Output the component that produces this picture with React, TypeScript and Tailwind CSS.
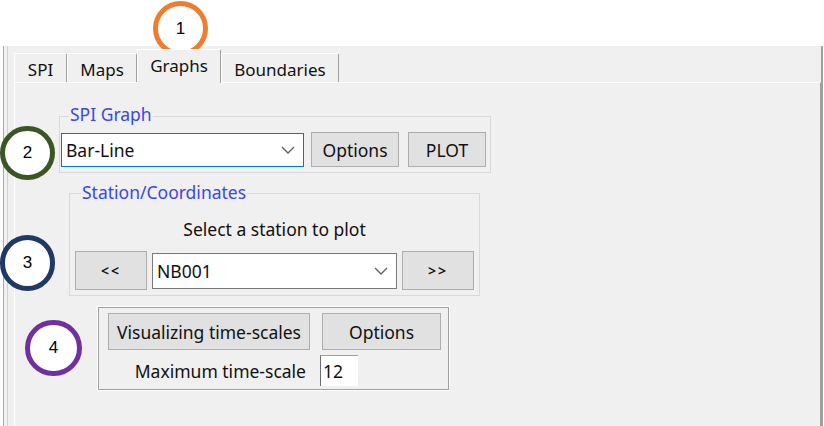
import React from "react";

type Tab = { label: string; width: string; active?: boolean };

const TABS: Tab[] = [
  { label: "SPI", width: "w-[53px]" },
  { label: "Maps", width: "w-[70px]" },
  { label: "Graphs", width: "w-[84px]", active: true },
  { label: "Boundaries", width: "w-[118px]" },
];

function Chevron() {
  return (
    <svg width="14" height="8" viewBox="0 0 14 8" className="shrink-0">
      <polyline points="1,1 7,7 13,1" fill="none" stroke="#5f5f5f" strokeWidth="1.3" />
    </svg>
  );
}

function Combo({ value, width, focused }: { value: string; width: string; focused?: boolean }) {
  return (
    <div
      className={`flex h-[34px] items-center justify-between bg-white pl-[4px] pr-[8px] ${width} border ${
        focused ? "border-[#0078d7]" : "border-[#7a7a7a]"
      }`}
    >
      <span>{value}</span>
      <Chevron />
    </div>
  );
}

function Btn({ children, className }: { children: React.ReactNode; className: string }) {
  return (
    <button className={`flex items-center justify-center border border-[#adadad] bg-[#e1e1e1] ${className}`}>
      {children}
    </button>
  );
}

function Marker({ n, color, pos }: { n: number; color: string; pos: string }) {
  return (
    <div
      className={`absolute flex items-center justify-center rounded-full border-[5px] bg-white font-['Liberation_Sans',sans-serif] text-[17px] text-black ${color} ${pos}`}
    >
      {n}
    </div>
  );
}

export default function App() {
  return (
    <div className="relative h-[426px] w-[824px] overflow-hidden bg-white font-['Noto_Sans',sans-serif] text-[17.5px] leading-[22px] text-[#111]">
      <div className="h-[46px]" />
      <div className="ml-[3px] flex h-[380px] w-[820px] border-l border-r-2 border-l-[#a9a9a9] border-r-[#a0a0a0] bg-[#f0f0f0]">
        <div className="ml-[3px] flex flex-1 flex-col border-l border-[#d2d2d2] pl-[6px]">
          {/* tab strip */}
          <div className="flex h-[36px] items-end text-[17px]">
            {TABS.map((t) =>
              t.active ? (
                <div
                  key={t.label}
                  className={`relative z-10 -mb-px flex h-[34px] items-start justify-center rounded-tr-[2px] border-l border-r border-t border-l-white border-r-[#a0a0a0] border-t-white bg-[#f0f0f0] pt-[5px] ${t.width}`}
                >
                  {t.label}
                </div>
              ) : (
                <div
                  key={t.label}
                  className={`flex h-[29px] items-start justify-center rounded-tr-[2px] border-l border-r border-t border-l-white border-r-[#a0a0a0] border-t-white pt-[5px] ${t.width}`}
                >
                  {t.label}
                </div>
              )
            )}
          </div>

          {/* tab page */}
          <div className="flex flex-1 flex-col border-l border-r border-t border-l-white border-r-[#a0a0a0] border-t-white">
            {/* SPI Graph */}
            <div className="relative ml-[44px] mt-[33px] h-[57px] w-[432px] border border-[#d9d9d9]">
              <span className="absolute -top-[14px] left-[9px] bg-[#f0f0f0] px-[1px] text-[#3a46ee]">SPI Graph</span>
              <div className="mt-[15px] flex h-[35px] items-center pl-[1px]">
                <Combo value="Bar-Line" width="w-[243px]" focused />
                <Btn className="ml-[7px] h-[35px] w-[88px]">Options</Btn>
                <Btn className="ml-[9px] h-[35px] w-[78px]">PLOT</Btn>
              </div>
            </div>

            {/* Station/Coordinates */}
            <div className="relative ml-[54px] mt-[20px] h-[103px] w-[411px] border border-[#d9d9d9]">
              <span className="absolute -top-[13px] left-[11px] bg-[#f0f0f0] px-[1px] text-[#3a46ee]">
                Station/Coordinates
              </span>
              <div className="mt-[24px] text-center">Select a station to plot</div>
              <div className="mt-[11px] flex h-[39px] items-center pl-[5px]">
                <Btn className="h-[39px] w-[72px] text-[14px] font-semibold tracking-[2px]">&lt;&lt;</Btn>
                <div className="ml-[5px]">
                  <Combo value="NB001" width="w-[245px] h-[36px]" />
                </div>
                <Btn className="ml-[5px] h-[39px] w-[72px] text-[14px] font-semibold tracking-[2px]">&gt;&gt;</Btn>
              </div>
            </div>

            {/* time-scales */}
            <div className="ml-[83px] mt-[11px] h-[83px] w-[351px] border border-[#a0a0a0] shadow-[0_0_0_1px_#ffffff]">
              <div className="flex pl-[9px] pt-[5px]">
                <Btn className="h-[37px] w-[202px]">Visualizing time-scales</Btn>
                <Btn className="ml-[12px] h-[37px] w-[119px]">Options</Btn>
              </div>
              <div className="mt-[5px] flex items-center">
                <span className="w-[207px] text-right">Maximum time-scale</span>
                <div className="ml-[14px] flex h-[31px] w-[38px] items-center border-l border-t border-l-[#6d6d6d] border-t-[#a0a0a0] bg-white pl-[2px]">
                  12
                </div>
              </div>
            </div>
          </div>
        </div>
      </div>

      <Marker n={1} color="border-[#ed7d31]" pos="left-[153px] top-[1px] h-[55px] w-[55px]" />
      <Marker n={2} color="border-[#3a5625]" pos="left-0 top-[126px] h-[54px] w-[55px]" />
      <Marker n={3} color="border-[#203864]" pos="left-0 top-[235px] h-[56px] w-[55px]" />
      <Marker n={4} color="border-[#7030a0]" pos="left-[25px] top-[320px] h-[56px] w-[57px]" />
    </div>
  );
}
